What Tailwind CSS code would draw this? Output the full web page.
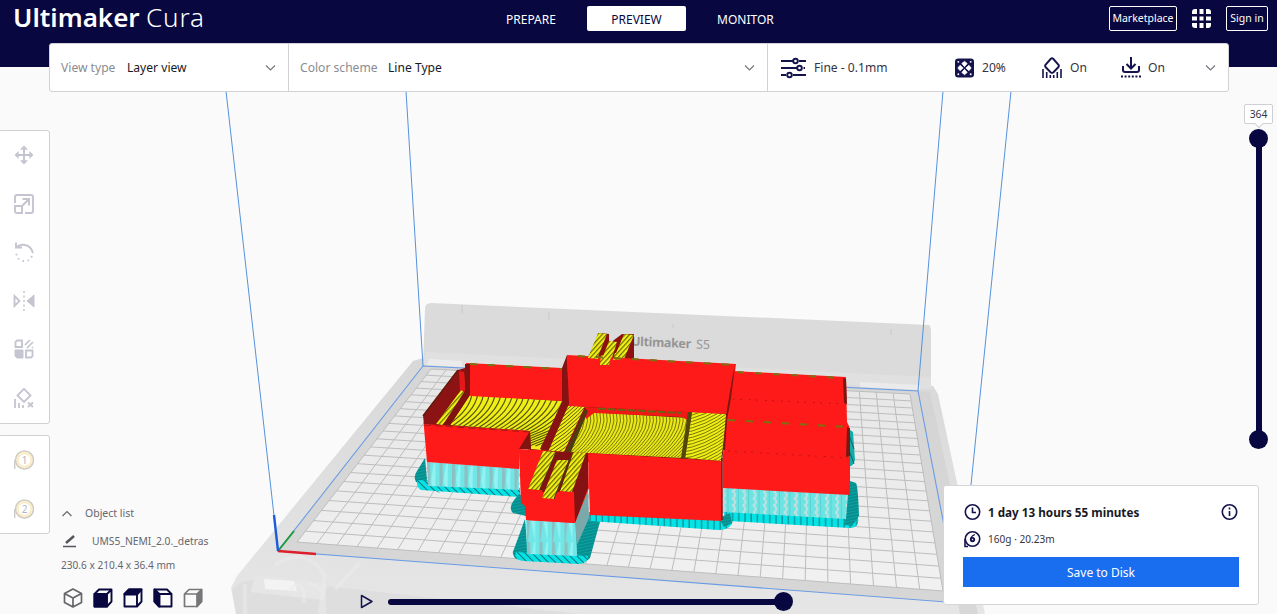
<!DOCTYPE html>
<html lang="en">
<head>
<meta charset="utf-8">
<title>Ultimaker Cura</title>
<script src="https://cdn.jsdelivr.net/npm/@tailwindcss/browser@4"></script>
</head>
<body class="h-[614px] w-[1277px] overflow-hidden bg-[#fafafa] font-['Noto_Sans','Open_Sans',sans-serif] text-[12px] text-[#35353f]">
<div class="relative flex h-[614px] flex-col">

<!-- 3D viewport -->
<svg class="absolute inset-0" width="1277" height="614" viewBox="0 0 1277 614">
  <defs>
    <linearGradient id="frame" x1="0" y1="0" x2="0" y2="1"><stop offset="0" stop-color="#d8d8d8"/><stop offset="1" stop-color="#e6e6e6"/></linearGradient>
    <linearGradient id="bed" x1="0" y1="0" x2="0" y2="1"><stop offset="0" stop-color="#e6e6e6"/><stop offset="1" stop-color="#f1f1f1"/></linearGradient>
    <pattern id="support" width="12.5" height="40" patternUnits="userSpaceOnUse" patternTransform="translate(0 22)"><rect width="12.5" height="40" fill="#70e6e7"/><path d="M2 0L5 0L5.500 16L3 40L2 40Z" fill="#8dbfc1"/><path d="M6 18L9 0L10.500 0L10 40Z" fill="#93f3f3"/></pattern>
    <pattern id="support2" width="10.300" height="7" patternUnits="userSpaceOnUse"><rect width="10.300" height="7" fill="#6ce4e4"/><path d="M1 0h2.500v3h-2.500zM2.500 3h2v4h-2z" fill="#c8dede"/><path d="M7 0v7" stroke="#5bd0d0"/></pattern>
    <pattern id="raft" width="6.200" height="20" patternUnits="userSpaceOnUse"><rect width="6.200" height="20" fill="#05e3e6"/><path d="M1 0v20" stroke="#067b7e" stroke-width="1"/></pattern>
    <pattern id="raftL" width="7" height="7" patternUnits="userSpaceOnUse"><rect width="7" height="7" fill="#05e3e6"/><path d="M0 0L7 7M-1 6L1 8M6 -1L8 1" stroke="#067b7e" stroke-width="1.100"/></pattern>
    <pattern id="raftD" width="4" height="3" patternUnits="userSpaceOnUse" patternTransform="rotate(-12)"><rect width="4" height="3" fill="#0aa3a3"/><path d="M0 1h4" stroke="#067778"/></pattern>
    <pattern id="fine" width="4" height="3.400" patternUnits="userSpaceOnUse" patternTransform="rotate(-48)"><rect width="4" height="3.400" fill="#f2f014"/><path d="M0 1.500h4" stroke="#4d4e00" stroke-width="1"/></pattern>
    <clipPath id="cLeft"><path d="M470 395L562 401L541 450L531 449L530 431L450 425Z"/></clipPath>
    <clipPath id="cMid"><path d="M588 412L688 418L683 458L588 453L580 457L567 459L585 418Z"/></clipPath>
    <clipPath id="cRight"><path d="M692 412L727 414L721 461L685 458Z"/></clipPath>
    <clipPath id="cStrip"><path d="M567 405L585 407L562 457L547 451Z"/></clipPath>
  </defs>

  <!-- printer frame -->
  <path d="M413 361L423 358L933 386L938 394L985 614H236L231 588L237 576Z" fill="url(#frame)"/>
  <path d="M236 614L232 590Q240 580 256 580L325 586L331 614ZM331 614L325 586L580 614Z" fill="#dcdcdc" opacity=".8"/>
  <path d="M256 575L328 584L323 600L250 592Z" fill="#e6e6e6"/>
  <path d="M264 579L294 581L297 591L265 589Z" fill="#f3f3f3"/>
  <path d="M290 590q8 -10 14 1v12M275 565q30 -20 50 10l-5 39M335 590q10 -12 25 -27M245 584v30M307 583q12 2 17 12v19" fill="none" stroke="#ebebeb" stroke-width="4" opacity=".5"/>
  <path d="M425 309Q425 303 431 303L929 325Q931 326 931 332V386L933 389L423 366Z" fill="#dbdbdb"/>
  <path d="M426 352L931 377V389L423 365Z" fill="#e0e0e0"/>
  <path d="M429 359L462 361V367L427 365ZM860 382L920 385V390L860 387Z" fill="#ebebeb"/>
  <path d="M462 305v8M549 312v8M673 324v4M891 329v6" stroke="#c9c9c9"/>
  <g transform="matrix(1 .045 -.03 1 631 345.500)" fill="#959595" font-family="Noto Sans" font-size="12.500"><text font-weight="700" textLength="60">Ultimaker</text><text x="65" textLength="14">S5</text></g>

  <!-- build plate -->
  <path d="M423 366L918 391L959 603L278 551Z" fill="#d6d6d6"/>
  <path d="M431 369L910 394L943 591L297 542Z" fill="url(#bed)"/>
  <path id="grid" fill="none" stroke="#bdbdbd" stroke-width="1"/>
  <path d="M918 391L930 392L978 614H960Z" fill="#d2d2d2" opacity=".7"/>
  <path d="M423 366L918 391L959 603L278 551Z" fill="none" stroke="#6a9ce4" stroke-width="1.100"/>
  <path d="M226 91L278 551M406 91L423 366M943 91L918 391M1011 91L959 603" fill="none" stroke="#5591dc" stroke-width="1"/>
  <path d="M278 551L294 531" stroke="#1d9a3c" stroke-width="2"/><path d="M278 551L316 554" stroke="#dc1f2a" stroke-width="2.400"/><path d="M278 551L274 515" stroke="#1b5cd8" stroke-width="2.400"/>

  <!-- rafts and supports -->
  <path d="M425 458L427 480L440 493L416 482Q413 477 417 471Z" fill="url(#raftD)"/>
  <path d="M418 480L520 488V497L421 490Q415 486 418 480Z" fill="url(#raftL)"/>
  <path d="M427 462L519 468V490L428 486Z" fill="url(#support)"/>
  <path d="M519 494L526 498V516L513 513Q508 508 514 500Z" fill="url(#raftD)"/>
  <path d="M525 519L528 556L516 559Q511 554 514 549ZM588 515L601 518L590 558Q586 563 577 562L575 530Z" fill="url(#raftD)"/>
  <path d="M516 552L588 556Q588 563 579 564L524 561Q513 560 516 552Z" fill="url(#raftL)"/>
  <path d="M526 520L576 523L577 556L527 554Z" fill="url(#support)"/>
  <path d="M588 488L589 518L577 545L575 523Z" fill="#79a9aa"/>
  <path d="M589 512L733 517L732 524Q728 530 718 530L589 521Z" fill="url(#raft)"/>
  <path d="M722 510L858 517Q860 528 850 528L728 521Z" fill="url(#raft)"/>
  <path d="M719 518L730 513L732 523L724 527ZM847 480L856 483Q858 486 859 516L852 526L845 525Z" fill="url(#raftD)"/>
  <path d="M723 487L848 494L846 519L723 512Z" fill="url(#support2)"/>
  <path d="M847 428L853 432L855 460Q853 467 849 466Z" fill="#13aaa9"/><path d="M849 435L854 449M849 450L854 464" stroke="#086868"/>

  <!-- model: rear pins -->
  <path d="M587 360L599 333L609 334V345L614 340L622 334H634V361Z" fill="#8c1111"/>
  <path d="M598 333L607 334L597 359L588 358ZM609 341L617 342L610 364L600 364ZM624 334L634 335L624 359L614 358Z" fill="url(#fine)"/>

  <!-- model: floors -->
  <path d="M450 380L565 398L590 405L728 412L722 462L560 462L530 450L440 427Z" fill="#6f1c0b"/>
  <path d="M450 425L470 395L562 401L541 450L531 449L530 431Z" fill="#f0ee18"/>
  <path d="M567 405L585 407L562 457L547 451Z" fill="#efec16"/>
  <path d="M588 412L688 418L683 458L588 453L580 457L567 459L585 418Z" fill="#e9e716"/>
  <path d="M692 412L727 414L721 461L685 458Z" fill="#f0ee14"/>
  <g clip-path="url(#cLeft)"><path id="sLeft" fill="none" stroke="#55560a" stroke-width="1.200"/></g>
  <g clip-path="url(#cStrip)"><path id="sStrip" fill="none" stroke="#5b5c0a" stroke-width="1"/></g>
  <g clip-path="url(#cMid)"><path id="sMid" fill="none" stroke="#77780c" stroke-width="1"/></g>
  <g clip-path="url(#cRight)"><path id="sRight" fill="none" stroke="#77780c" stroke-width="1"/></g>
  <path d="M585 407L691 412L689 421L682 417L594 413L586 419Z" fill="#f01716"/>
  <path d="M597 408.500L682 413" stroke="#6b6212" stroke-width="2" stroke-dasharray="8 2"/>
  <path d="M688 412L692 412L685 459L681 458Z" fill="#53470c"/>
  <path d="M585 408L588 411L568 459L562 458Z" fill="#4e3c10"/><path d="M585 408L562 458" stroke="#941413" stroke-width="1.500"/>

  <!-- model: left box -->
  <path d="M466 363L562 368V401L471 396L466 394Z" fill="#ff1a1a"/>
  <path d="M458 370L465 368L466 390L440 427L424 424L423 415Z" fill="#8c1313"/>
  <path d="M459 371L464 372L466 391L460 392Z" fill="#e31919"/>
  <path d="M461 390L464 392L443 425L436 424Z" fill="url(#fine)"/>
  <path d="M465 364L470 364V395L449 427L442 426L465 393Z" fill="#801212"/>
  <path d="M424 424L530 431L530 436L520 449L519 469L427 462L423 416Z" fill="#ff1a1a"/>
  <path d="M423 416L458 370" stroke="#5f1c0a" stroke-width="1.500"/>
  <path d="M530 431L531 449L519 449Z" fill="#7f1411"/>

  <!-- model: main back wall and divider -->
  <path d="M567 355L736 364L732 396L727 414L568 406Z" fill="#ff1a1a"/>
  <path d="M562 368L567 355L569 404L548 452L540 449L562 403Z" fill="#861212"/>
  <path d="M589 354L598 354L598 359L588 358ZM601 355L611 357L609 365H600ZM615 353L625 353L622 359L613 360Z" fill="url(#fine)"/>

  <!-- model: right blocks -->
  <path d="M733 371L846 377L847 422L849 426L850 458L850 495L723 488V455L726 418L730 396Z" fill="#ff1a1a"/>
  <path d="M843 378L846 379L847 404L844 403ZM733 374L735 366L731 398L727 420L725 450H723L726 415ZM847 427L850 428V456L846 457Z" fill="#791710"/>
  <path d="M733 399L846 404M728 451L848 458" stroke="#be1416" stroke-dasharray="2 5 2 7" />
  <path d="M470 364L562 369M578 356L735 365M737 372L843 378M728 420L848 427" stroke="#7c7010" stroke-width="2" stroke-dasharray="7 11"/>
  <path d="M424 425L530 432" stroke="#a71515" stroke-dasharray="7 4"/>

  <!-- model: front wall and tower -->
  <path d="M588 453L722 461L722 521L590 515Z" fill="#ff1a1a"/>
  <path d="M722 458V520" stroke="#811313" stroke-width="1.500"/>
  <path d="M519 449L541 450L588 454L589 488L575 523L526 520L525 506L521 503Z" fill="#ff1a1a"/>
  <path d="M545 451L588 453L588 488L575 523L574 492H541L528 489Z" fill="#851212"/>
  <path d="M528 489L542 490L543 499L554 499L560 491L574 492V523L526 520V490Z" fill="#ff1a1a"/>
  <path d="M543 451L556 452L539 490L528 489ZM557 460L569 460L554 499L542 498ZM573 452L586 453L572 492L560 491Z" fill="url(#fine)"/>
  <path d="M556 452L540 490M569 460L554 499M573 452L560 490" stroke="#4e3510" stroke-width="1"/>
</svg>

<!-- header -->
<header class="relative flex h-[67px] shrink-0 items-start bg-[#08073f] text-white">
  <h1 class="ml-[13px] mt-[-1px] w-[493px] whitespace-nowrap text-[26px] leading-[37px]"><span class="inline-block w-[133px] font-semibold">Ultimaker</span><span class="font-light tracking-[0.9px]">Cura</span></h1>
  <nav class="mt-[6px] flex h-[25px] items-center">
    <span class="w-[81px] pt-[2px]">PREPARE</span>
    <span class="flex h-[25px] w-[99px] items-center justify-center rounded-[2px] bg-white pt-[2px] text-[#08073f]">PREVIEW</span>
    <span class="ml-[31px] pt-[2px]">MONITOR</span>
  </nav>
  <div class="ml-auto mr-[9px] mt-[6px] flex h-[25px] items-center text-[10.500px]">
    <span class="flex h-[25px] w-[68px] items-center justify-center rounded-[2px] border border-white pt-px">Marketplace</span>
    <svg class="ml-[15px]" width="19" height="19" viewBox="0 0 19 19" fill="#fff"><path d="M3 0h2v5H0V3Q0 0 3 0ZM7.500 0h4v5h-4ZM14 0h2q3 0 3 3v2h-5ZM0 7.500h5v4H0ZM7.500 7.500h4v4h-4ZM14 7.500h5v4h-5ZM0 14h5v5H3q-3 0-3-3ZM7.500 14h4v5h-4ZM14 14h5v2q0 3-3 3h-2Z"/></svg>
    <span class="ml-[15px] flex h-[25px] w-[42px] items-center justify-center rounded-[2px] border border-white pt-px">Sign in</span>
  </div>
</header>

<!-- stage bar -->
<section class="relative ml-[49px] mt-[-24px] flex h-[49px] w-[1180px] shrink-0 items-stretch rounded-[3px] border border-[#d2d2d6] bg-white text-[12.100px]">
  <div class="flex w-[239px] items-center border-r border-[#d2d2d6] pl-[11px] pr-[12px]">
    <span class="w-[66px] pt-[2px] text-[#8b8b91]">View type</span><span class="pt-[2px] text-[#191924]">Layer view</span>
    <svg class="ml-auto" width="11" height="8" fill="none" stroke="#77777f" stroke-width="1.200"><path d="M1 1.500L5.500 6L10 1.500"/></svg>
  </div>
  <div class="flex w-[479px] items-center border-r border-[#d2d2d6] pl-[11px] pr-[12px]">
    <span class="w-[88px] pt-[2px] text-[#8b8b91]">Color scheme</span><span class="pt-[2px] text-[#191924]">Line Type</span>
    <svg class="ml-auto" width="11" height="8" fill="none" stroke="#77777f" stroke-width="1.200"><path d="M1 1.500L5.500 6L10 1.500"/></svg>
  </div>
  <div class="flex flex-1 items-center pl-[13px] pr-[12px]">
    <svg width="25" height="22" viewBox="0 0 25 22" fill="none" stroke="#15134d" stroke-width="1.900"><path d="M0 4h12M18 4h7M0 11h16M22.500 11h1.500M0 18h5M12 18h13"/><circle cx="14.500" cy="4" r="2.300"/><circle cx="18.500" cy="11" r="2.300"/><circle cx="8.500" cy="18" r="2.300"/></svg>
    <span class="ml-[8px] w-[141px] pt-[2px]">Fine - 0.1mm</span>
    <svg width="19" height="20" viewBox="0 0 20 20"><rect width="20" height="20" rx="3.500" fill="#15134d"/><g fill="#fff"><path d="M10 3l2.800 2.300L10 8.600L7.200 5.300ZM10 11.400l2.800 3.300L10 17l-2.800-2.300ZM3 10l2.300-2.800L8.600 10l-3.300 2.800ZM17 10l-2.300-2.800L11.400 10l3.300 2.800Z" stroke="#fff" stroke-linejoin="round" stroke-width=".8"/><circle cx="3.500" cy="3.500" r="1"/><circle cx="16.500" cy="3.500" r="1"/><circle cx="3.500" cy="16.500" r="1"/><circle cx="16.500" cy="16.500" r="1"/></g></svg>
    <span class="ml-[8px] w-[60px] pt-[2px]">20%</span>
    <svg width="20" height="22" viewBox="0 0 20 22" fill="none" stroke="#15134d" stroke-width="1.900"><path d="M8.800 1.800Q10 .8 11.200 1.800L16.500 7.800Q17.300 9 16.500 10L11.200 15.500Q10 16.300 8.800 15.500L3.500 10Q2.700 9 3.500 7.800Z"/><path d="M1 12v9M4.700 15v6M8.300 18v3M11.700 18v3M15.300 15v6M19 12v9" stroke-width="1.600"/></svg>
    <span class="ml-[8px] w-[51px] pt-[2px]">On</span>
    <svg width="20" height="22" viewBox="0 0 20 22" fill="none" stroke="#15134d" stroke-width="2"><path d="M10 0v11M5.500 7L10 11.500L14.500 7M2 9v4q0 2 2 2h12q2 0 2-2V9"/><path d="M0 19.500h20" stroke-dasharray="2 1.600"/></svg>
    <span class="ml-[7px] pt-[2px]">On</span>
    <svg class="ml-auto" width="11" height="8" fill="none" stroke="#77777f" stroke-width="1.200"><path d="M1 1.500L5.500 6L10 1.500"/></svg>
  </div>
</section>

<main class="relative flex h-[522px] justify-between">
  <!-- left column: tools and extruders -->
  <div class="flex w-[230px] flex-col">
    <div class="ml-[-2px] mt-[38px] flex h-[294px] w-[52px] flex-col items-center justify-between rounded-[3px] border border-[#cfcfd4] bg-white pb-[15px] pt-[14px] text-[#c5c5d2]">
      <svg width="20" height="20" viewBox="0 0 20 20" fill="none" stroke="currentColor" stroke-width="1.900"><path d="M10 2v16M2 10h16"/><path d="M7.500 4L10 1.500L12.500 4ZM7.500 16L10 18.500L12.500 16ZM4 7.500L1.500 10L4 12.500ZM16 7.500L18.500 10L16 12.500Z" stroke-width="1.300" fill="currentColor"/></svg>
      <svg width="20" height="20" viewBox="0 0 20 20" fill="none" stroke="currentColor" stroke-width="1.900"><path d="M1 9V3q0-2 2-2h14q2 0 2 2v14q0 2-2 2h-6M1 12h7v7H3q-2 0-2-2ZM8 12l7-7M8.500 5H15v6.500"/></svg>
      <svg width="20" height="20" viewBox="0 0 20 20" fill="none" stroke="currentColor" stroke-width="1.900"><path d="M2 .5v5h6M2 5.500Q6 2 11 3Q17 4 19 11"/><path d="M18 14q-3 6-9 5q-6-1-7-9" stroke-dasharray="1.500 3.500"/></svg>
      <svg width="22" height="20" viewBox="0 0 22 20" fill="none" stroke="currentColor" stroke-width="1.900"><path d="M1.500 5L6.500 10L1.500 15Z"/><path d="M21 4v12l-7-6Z" fill="currentColor" stroke-width="1"/><path d="M11 0v20" stroke-dasharray="2 2.500" stroke="#d5d2d0"/></svg>
      <svg width="20" height="20" viewBox="0 0 20 20" fill="none" stroke="currentColor" stroke-width="1.900"><path d="M3 1.500h5v6.500H1.500V3ZM12 11.500h6.500V17l-1.500 1.500h-5Z"/><path d="M1 11h8v8H3l-2-2Z" fill="currentColor" stroke-width="1"/><path d="M11 6l5-5M13 9l6-6M18 9l1-1" stroke-width="1.700"/></svg>
      <svg width="20" height="20" viewBox="0 0 20 20" fill="none" stroke="currentColor" stroke-width="1.800"><path d="M10 .8L16.500 7.500L10 14L3.500 7.500ZM1 11v9M5 15v5M9 17v3"/><path d="M14 14.500l5 4.500M19 14.500l-5 4.500"/></svg>
    </div>
    <div class="ml-[-2px] mt-[11px] flex h-[99px] w-[52px] flex-col items-center justify-between rounded-[3px] border border-[#cfcfd4] bg-white py-[14px]">
      <svg width="20" height="20" viewBox="0 0 20 20"><path d="M.5 19V10" stroke="#c9c9cf" stroke-width="1.800"/><circle cx="10.500" cy="10" r="9" fill="#fff3cd" stroke="#cfccc6" stroke-width="1.500"/><circle cx="10.500" cy="10" r="6.500" fill="#fff" stroke="#f4e5b9"/><text x="10.500" y="13.600" text-anchor="middle" font-size="10" fill="#b4b4c0">1</text></svg>
      <svg width="20" height="20" viewBox="0 0 20 20"><path d="M.5 19V10" stroke="#c9c9cf" stroke-width="1.800"/><circle cx="10.500" cy="10" r="9" fill="#fff3cd" stroke="#cfccc6" stroke-width="1.500"/><circle cx="10.500" cy="10" r="6.500" fill="#fff" stroke="#f4e5b9"/><text x="10.500" y="13.600" text-anchor="middle" font-size="10" fill="#b4b4c0">2</text></svg>
    </div>
  </div>
  <!-- right column: layer slider -->
  <div class="mr-[4px] mt-[12px] flex w-[29px] flex-col items-center">
    <div class="relative flex h-[20px] w-[29px] items-center justify-center rounded-[2px] border border-[#d0d0d4] bg-white pt-px text-[10.300px]">364<span class="absolute bottom-[-4px] size-[6px] rotate-45 border-b border-r border-[#d0d0d4] bg-white"></span></div>
    <div class="mt-[5px] size-[19px] shrink-0 rounded-full bg-[#08073f]"></div>
    <div class="my-[-2px] h-[286px] w-[6px] shrink-0 bg-[#08073f]"></div>
    <div class="size-[19px] shrink-0 rounded-full bg-[#08073f]"></div>
  </div>
</main>

<!-- object list -->
<section class="absolute left-[61px] top-[504px] flex w-[170px] flex-col whitespace-nowrap text-[10.500px] text-[#66666e]">
  <div class="flex h-[20px] items-center"><svg width="12" height="8" fill="none" stroke="#66666e" stroke-width="1.200"><path d="M1.500 6L6 1.500L10.500 6"/></svg><span class="ml-[12px]">Object list</span></div>
  <div class="mt-[7px] flex h-[20px] items-center"><svg class="ml-[2px]" width="13" height="14" viewBox="0 0 13 14" fill="none" stroke="#55555e"><path d="M0 12.500h13" stroke-width="1.500"/><path d="M3 9L11 2" stroke-width="2.500"/></svg><span class="ml-[16px] pt-px text-[10.300px]">UMS5_NEMI_2.0._detras</span></div>
  <div class="mt-[4px] flex h-[20px] items-center pt-px text-[10.100px]">230.6 x 210.4 x 36.4 mm</div>
  <div class="ml-[2px] mt-[13px] flex items-center gap-[10px]">
    <svg width="20" height="20" viewBox="0 0 20 20" fill="none" stroke="#65656a" stroke-width="1.700" stroke-linejoin="round"><path d="M10 1L18.500 5.500V14.500L10 19L1.500 14.500V5.500ZM1.500 5.500L10 10L18.500 5.500M10 10V19"/></svg>
    <svg width="20" height="20" viewBox="0 0 20 20" fill="none" stroke="#08073f" stroke-width="1.900" stroke-linejoin="round"><path d="M1.500 6L6 1.500H18.500V13.500L14 18.500H1.500ZM14 6L18.500 1.500"/><path d="M1.500 6H14V18.500H1.500Z" fill="#08073f"/></svg>
    <svg width="20" height="20" viewBox="0 0 20 20" fill="none" stroke="#08073f" stroke-width="1.900" stroke-linejoin="round"><path d="M1.500 6L6 1.500H18.500V13.500L14 18.500H1.500ZM14 6V18.500"/><path d="M1.500 6L6 1.500H18.500L14 6.500H1.500Z" fill="#08073f"/></svg>
    <svg width="20" height="20" viewBox="0 0 20 20" fill="none" stroke="#08073f" stroke-width="1.900" stroke-linejoin="round"><path d="M1.500 1.500H14L18.500 6V18.500H6L1.500 13.500ZM6.500 6H18.500"/><path d="M1.500 1.500L6.500 6V18.500L1.500 13.500Z" fill="#08073f"/></svg>
    <svg width="20" height="20" viewBox="0 0 20 20" fill="none" stroke="#77777a" stroke-width="1.700" stroke-linejoin="round"><path d="M1.500 6L6 1.500H18.500V13.500L14 18.500H1.500ZM1.500 6H14"/><path d="M14 6L18.500 1.500V13.500L14 18.500Z" fill="#77777a"/></svg>
  </div>
</section>

<!-- path playback -->
<div class="absolute left-[360px] top-[592px] flex h-[19px] items-center">
  <svg width="14" height="15" viewBox="0 0 14 15" fill="none" stroke="#15134d" stroke-width="1.500" stroke-linejoin="round"><path d="M1.500 1.500L12 7.500L1.500 13.500Z"/></svg>
  <div class="ml-[14px] h-[6px] w-[396px] rounded-l-full bg-[#08073f]"></div>
  <div class="ml-[-10px] size-[19px] rounded-full bg-[#08073f]"></div>
</div>

<!-- print summary -->
<section class="absolute left-[943px] top-[485px] flex h-[120px] w-[316px] flex-col rounded-[3px] border border-[#d6d6da] bg-white px-[19px]">
  <div class="mt-[17px] flex h-[18px] items-center">
    <svg width="18" height="18" viewBox="0 0 18 18" fill="none" stroke="#15134d" stroke-width="1.600"><circle cx="9.500" cy="9" r="7.200"/><path d="M9.500 4.500V9.500H13"/></svg>
    <b class="ml-[7px] pt-px text-[11.700px] font-bold text-[#191924]">1 day 13 hours 55 minutes</b>
    <svg class="ml-auto" width="18" height="18" viewBox="0 0 18 18" fill="none" stroke="#15134d" stroke-width="1.600"><circle cx="8.500" cy="9" r="7.200"/><path d="M8.500 8v5M8.500 4.500v2"/></svg>
  </div>
  <div class="mt-[9px] flex h-[18px] items-center">
    <svg width="18" height="18" viewBox="0 0 18 18" fill="none" stroke="#15134d" stroke-width="1.600"><circle cx="9.500" cy="9" r="7.200"/><path d="M2 9v7.500h3"/><path d="M12 4.500Q8.500 5.500 7.600 9" stroke-width="1.300"/><circle cx="9.500" cy="9.600" r="1.700" stroke-width="1.900"/></svg>
    <span class="ml-[7px] pt-px text-[10.100px]">160g · 20.23m</span>
  </div>
  <div class="mt-[9px] flex h-[30px] w-[276px] items-center justify-center bg-[#196ef0] pt-px text-[12px] text-white">Save to Disk</div>
</section>
</div>

<script>
  // Perspective mapping of the unit square onto the plate.
  const [A, B, C, D] = [[431,369],[910,394],[943,591],[297,542]];
  const dx1=B[0]-C[0], dx2=D[0]-C[0], sx=A[0]-B[0]+C[0]-D[0];
  const dy1=B[1]-C[1], dy2=D[1]-C[1], sy=A[1]-B[1]+C[1]-D[1];
  const den=dx1*dy2-dx2*dy1, g=(sx*dy2-dx2*sy)/den, h=(dx1*sy-sx*dy1)/den;
  const P=(u,v)=>{const w=g*u+h*v+1;return (((B[0]-A[0]+g*B[0])*u+(D[0]-A[0]+h*D[0])*v+A[0])/w).toFixed(1)+' '+(((B[1]-A[1]+g*B[1])*u+(D[1]-A[1]+h*D[1])*v+A[1])/w).toFixed(1)};
  let d='';
  for(let i=0;i<=30;i++) d+=`M${P(i/30,0)}L${P(i/30,1)}`;
  for(let j=0;j<=21;j++) d+=`M${P(0,j/21)}L${P(1,j/21)}`;
  const set=(id,v)=>document.getElementById(id).setAttribute('d',v);
  set('grid',d);
  // Infill lines on the model's floors.
  let a='',b='',c='',e='';
  for(let x=472;x<660;x+=5.8) a+=`M${x} 394Q${x-3} 414 ${x-34} 431L${x-70} 446`;
  for(let y=395;y<500;y+=3.6) b+=`M540 ${y+18}Q565 ${y+6} 590 ${y-22}`;
  for(let r=6;r<190;r+=3.3) c+=`M${545+r} 400Q${574+r} 425 ${520+r} 465`;
  for(let y=395;y<520;y+=3.2) e+=`M680 ${y}Q705 ${y-3} 730 ${y-22}`;
  set('sLeft',a);set('sStrip',b);set('sMid',c);set('sRight',e);
</script>
</body>
</html>
